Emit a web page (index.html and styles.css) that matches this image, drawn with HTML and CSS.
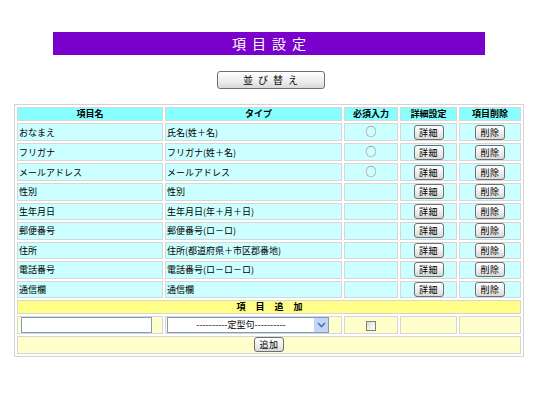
FILE: index.html
```html
<!DOCTYPE html>
<html lang="ja">
<head>
<meta charset="utf-8">
<title>項目設定</title>
<link rel="stylesheet" href="styles.css">
</head>
<body>
<div class="page">
  <div class="title">項目設定</div>
  <div class="sortrow"><span class="btn sortbtn">並び替え</span></div>
  <table class="grid">
    <colgroup>
      <col class="c1"><col class="c2"><col class="c3"><col class="c4"><col class="c5">
    </colgroup>
    <thead>
      <tr class="hd"><th>項目名</th><th class="type">タイプ</th><th>必須入力</th><th>詳細設定</th><th>項目削除</th></tr>
    </thead>
    <tbody>
      <tr><td>おなまえ</td><td>氏名(姓＋名)</td><td class="ctr"><span class="req">○</span></td><td class="ctr"><span class="btn sm">詳細</span></td><td class="ctr"><span class="btn sm">削除</span></td></tr>
      <tr><td>フリガナ</td><td>フリガナ(姓＋名)</td><td class="ctr"><span class="req">○</span></td><td class="ctr"><span class="btn sm">詳細</span></td><td class="ctr"><span class="btn sm">削除</span></td></tr>
      <tr><td>メールアドレス</td><td>メールアドレス</td><td class="ctr"><span class="req">○</span></td><td class="ctr"><span class="btn sm">詳細</span></td><td class="ctr"><span class="btn sm">削除</span></td></tr>
      <tr><td>性別</td><td>性別</td><td></td><td class="ctr"><span class="btn sm">詳細</span></td><td class="ctr"><span class="btn sm">削除</span></td></tr>
      <tr><td>生年月日</td><td>生年月日(年＋月＋日)</td><td></td><td class="ctr"><span class="btn sm">詳細</span></td><td class="ctr"><span class="btn sm">削除</span></td></tr>
      <tr><td>郵便番号</td><td>郵便番号(ロ－ロ)</td><td></td><td class="ctr"><span class="btn sm">詳細</span></td><td class="ctr"><span class="btn sm">削除</span></td></tr>
      <tr><td>住所</td><td>住所(都道府県＋市区郡番地)</td><td></td><td class="ctr"><span class="btn sm">詳細</span></td><td class="ctr"><span class="btn sm">削除</span></td></tr>
      <tr><td>電話番号</td><td>電話番号(ロ－ロ－ロ)</td><td></td><td class="ctr"><span class="btn sm">詳細</span></td><td class="ctr"><span class="btn sm">削除</span></td></tr>
      <tr><td>通信欄</td><td>通信欄</td><td></td><td class="ctr"><span class="btn sm">詳細</span></td><td class="ctr"><span class="btn sm">削除</span></td></tr>
      <tr class="addhd"><td colspan="5">項目追加</td></tr>
      <tr class="add">
        <td><span class="textbox"></span></td>
        <td><span class="select"><span class="seltext">----------定型句----------</span><span class="selarrow"><svg width="9" height="6" viewBox="0 0 9 6"><path d="M1 1 L4.5 4.5 L8 1" fill="none" stroke="#4d6fb0" stroke-width="1.6"/></svg></span></span></td>
        <td class="ctr"><span class="check"></span></td>
        <td></td>
        <td></td>
      </tr>
      <tr class="add"><td colspan="5" class="ctr"><span class="btn sm">追加</span></td></tr>
    </tbody>
  </table>
</div>
</body>
</html>
```
FILE: styles.css
```css
html, body {
  margin: 0;
  padding: 0;
  background: #ffffff;
}
body {
  font-family: "Noto Sans CJK JP", "DejaVu Sans", sans-serif;
  font-size: 9px;
  color: #000;
}
.page {
  width: 540px;
  padding-top: 32px;
}
.title {
  margin-left: 53px;
  width: 432px;
  height: 23px;
  background: #7a00cc;
  color: #ffffff;
  font-size: 14px;
  line-height: 23px;
  text-align: center;
  letter-spacing: 6px;
  text-indent: 6px;
}
.sortrow {
  display: flex;
  justify-content: center;
  margin-top: 16px;
  margin-bottom: 15px;
}
.btn {
  display: inline-flex;
  align-items: center;
  justify-content: center;
  box-sizing: border-box;
  border: 1px solid #6f6f6f;
  border-radius: 3px;
  background: linear-gradient(#ffffff, #ececec 60%, #d8d8d8);
  color: #000;
  font-size: 10px;
  line-height: 1;
}
.sortbtn {
  width: 108px;
  height: 18px;
  letter-spacing: 5px;
  text-indent: 5px;
  margin-left: 1px;
}
.btn.sm {
  width: 30px;
  height: 15px;
  font-size: 9px;
  letter-spacing: 0.5px;
}
.grid {
  margin-left: 14px;
  width: 509px;
  table-layout: fixed;
  border-collapse: separate;
  border-spacing: 2px;
  border: 1px solid #d4d4d4;
  background: #ffffff;
}
col.c1 { width: 146px; }
col.c2 { width: 177px; }
col.c3 { width: 54px; }
col.c4 { width: 57px; }
col.c5 { width: 62px; }
.grid th, .grid td {
  border: 1px solid #d6d6d6;
  padding: 0 0 0 1px;
  height: 15.5px;
  line-height: 15px;
  white-space: nowrap;
  overflow: hidden;
}
.grid th {
  background: #88ffff;
  font-weight: bold;
  text-align: center;
  height: 12px;
  line-height: 12px;
  padding: 0;
}
.grid th.type {
  padding-left: 10px;
}
.grid td {
  background: #ccffff;
  text-align: left;
}
.grid td.ctr {
  text-align: center;
  padding: 0;
}
.req {
  color: #b0574a;
  font-size: 11px;
}
.grid tr.addhd td {
  background: #ffff88;
  font-weight: bold;
  text-align: center;
  height: 12px;
  line-height: 12px;
  letter-spacing: 10px;
  text-indent: 10px;
}
.grid tr.add td {
  background: #ffffcc;
  vertical-align: middle;
}
.textbox {
  display: block;
  box-sizing: border-box;
  width: 131px;
  height: 16px;
  margin-left: 2px;
  border: 1px solid #7f9db9;
  background: #ffffff;
}
.select {
  display: flex;
  box-sizing: border-box;
  width: 162px;
  height: 16px;
  border: 1px solid #7f9db9;
  background: #ffffff;
  align-items: center;
}
.seltext {
  flex: 1;
  text-align: center;
  font-size: 9px;
  line-height: 14px;
  overflow: hidden;
}
.selarrow {
  width: 14px;
  height: 14px;
  background: #c4d6f8;
  display: flex;
  align-items: center;
  justify-content: center;
}
.check {
  display: inline-block;
  width: 10px;
  height: 10px;
  box-sizing: border-box;
  border: 1px solid #7f7f7f;
  background: linear-gradient(135deg, #dcdcd6, #ffffff);
  vertical-align: middle;
}
```
